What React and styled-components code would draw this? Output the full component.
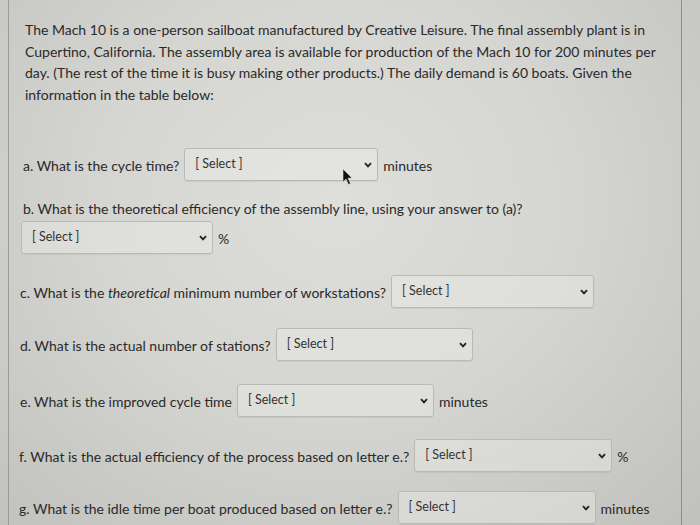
import React from "react"
import styled, { createGlobalStyle } from "styled-components"

const GlobalStyle = createGlobalStyle`
  html, body {
    margin: 0;
    padding: 0;
    width: 700px;
    height: 525px;
    overflow: hidden;
    background: #cfcfcb;
  }
  #root {
    height: 525px;
  }
`

const Screen = styled.div`
  position: relative;
  width: 700px;
  height: 525px;
  overflow: hidden;
  background: radial-gradient(
    ellipse at 48% 38%,
    #dededa 0%,
    #d5d5d1 45%,
    #c0c0bc 100%
  );
  font-family: Lato, "Open Sans", sans-serif;
  color: #2a2a2a;
`

const Panel = styled.div`
  margin-left: 8px;
  width: 674px;
  height: 525px;
  box-sizing: border-box;
  border-left: 1px solid #9a9a96;
  border-right: 1px solid #8e8e8a;
  padding: 19px 0 0 14px;
`

const Intro = styled.p`
  margin: 0 0 44px 2px;
  font-size: 14px;
  line-height: 21.5px;
  width: 640px;
`

const Question = styled.div`
  display: flex;
  align-items: center;
  gap: 5px;
  font-size: 14px;
  margin-top: ${({ top }) => top ?? 0}px;
  margin-bottom: ${({ gap }) => gap ?? 20}px;
  margin-left: ${({ indent }) => indent ?? 0}px;
`

const Label = styled.div`
  font-size: 14px;
  line-height: 20px;
`

const Select = styled.div`
  display: flex;
  align-items: center;
  justify-content: space-between;
  box-sizing: border-box;
  width: ${({ width }) => width}px;
  height: 33px;
  padding: 0 5px 0 10px;
  border: 1px solid #b9b9b5;
  border-radius: 3px;
  background: rgba(238, 238, 234, 0.4);
  box-shadow: 0 1px 1px rgba(0, 0, 0, 0.06);
  font-size: 12.5px;
  color: #333;
  margin-top: -1px;
  span {
    margin-top: -2px;
  }
`

const Unit = styled.span`
  font-size: 14px;
`

const Cursor = styled.svg`
  position: absolute;
  left: 342px;
  top: 168px;
`

const Chevron = () => (
  <svg width="8" height="6" viewBox="0 0 8 6">
    <path
      d="M1 1.2 L4 4.4 L7 1.2"
      fill="none"
      stroke="#222"
      strokeWidth="1.8"
    />
  </svg>
)

const Dropdown = ({ width }) => (
  <Select width={width}>
    <span>[ Select ]</span>
    <Chevron />
  </Select>
)

export default function App() {
  return (
    <Screen>
      <GlobalStyle />
      <Panel>
        <Intro>
          The Mach 10 is a one-person sailboat manufactured by Creative
          Leisure. The final assembly plant is in Cupertino, California. The
          assembly area is available for production of the Mach 10 for 200
          minutes per day. (The rest of the time it is busy making other
          products.) The daily demand is 60 boats. Given the information in the
          table below:
        </Intro>

        <Question gap={18}>
          a. What is the cycle time?
          <Dropdown width={194} />
          <Unit>minutes</Unit>
        </Question>

        <Label>b. What is the theoretical efficiency of the assembly line, using your answer to (a)?</Label>
        <Question top={3} gap={22} indent={-2}>
          <Dropdown width={192} />
          <Unit>%</Unit>
        </Question>

        <Question gap={21} indent={-3}>
          <span>
            c. What is the <i>theoretical</i> minimum number of workstations?
          </span>
          <Dropdown width={203} />
        </Question>

        <Question gap={24} indent={-3}>
          d. What is the actual number of stations?
          <Dropdown width={197} />
        </Question>

        <Question gap={23} indent={-3}>
          e. What is the improved cycle time
          <Dropdown width={197} />
          <Unit>minutes</Unit>
        </Question>

        <Question gap={20} indent={-4}>
          f. What is the actual efficiency of the process based on letter e.?
          <Dropdown width={198} />
          <Unit>%</Unit>
        </Question>

        <Question gap={0} indent={-4}>
          g. What is the idle time per boat produced based on letter e.?
          <Dropdown width={198} />
          <Unit>minutes</Unit>
        </Question>
      </Panel>
      <Cursor width="12" height="18" viewBox="0 0 12 18">
        <path
          d="M1 1 L1 14 L4 11 L6.5 16.5 L8.5 15.6 L6 10.2 L10 10 Z"
          fill="#111"
          stroke="#ddd"
          strokeWidth="0.6"
        />
      </Cursor>
    </Screen>
  )
}
